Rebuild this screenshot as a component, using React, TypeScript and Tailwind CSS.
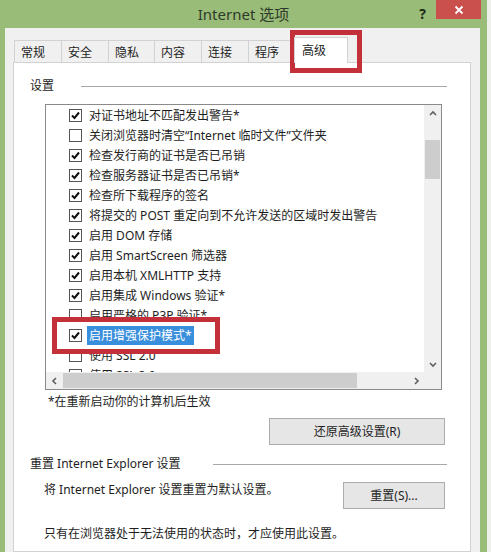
import React from 'react';

const rows: { checked: boolean; label: string; selected?: boolean }[] = [
  { checked: true, label: '对证书地址不匹配发出警告*' },
  { checked: false, label: '关闭浏览器时清空“Internet 临时文件”文件夹' },
  { checked: true, label: '检查发行商的证书是否已吊销' },
  { checked: true, label: '检查服务器证书是否已吊销*' },
  { checked: true, label: '检查所下载程序的签名' },
  { checked: true, label: '将提交的 POST 重定向到不允许发送的区域时发出警告' },
  { checked: true, label: '启用 DOM 存储' },
  { checked: true, label: '启用 SmartScreen 筛选器' },
  { checked: true, label: '启用本机 XMLHTTP 支持' },
  { checked: true, label: '启用集成 Windows 验证*' },
  { checked: false, label: '启用严格的 P3P 验证*' },
  { checked: true, label: '启用增强保护模式*', selected: true },
  { checked: false, label: '使用 SSL 2.0' },
  { checked: false, label: '使用 SSL 3.0' },
];

const tabs = ['常规', '安全', '隐私', '内容', '连接', '程序'];
const tabWidths = ['w-[48px]', 'w-[48px]', 'w-[47px]', 'w-[48px]', 'w-[48px]', 'w-[48px]'];

const Checkbox = ({ checked }: { checked: boolean }) => (
  <div className="w-[13px] h-[13px] border border-[#555] bg-white flex items-center justify-center shrink-0">
    {checked && (
      <svg width="11" height="11" viewBox="0 0 11 11">
        <path d="M2 5.5 L4.5 8 L9 2.5" fill="none" stroke="#111" strokeWidth="2" />
      </svg>
    )}
  </div>
);

const Chevron = ({ dir }: { dir: 'up' | 'down' | 'left' | 'right' }) => {
  const d = {
    up: 'M2 6 L5 3 L8 6',
    down: 'M2 4 L5 7 L8 4',
    left: 'M6 2 L3 5 L6 8',
    right: 'M4 2 L7 5 L4 8',
  }[dir];
  return (
    <svg width="10" height="10" viewBox="0 0 10 10">
      <path d={d} fill="none" stroke="#606060" strokeWidth="1.6" />
    </svg>
  );
};

const App: React.FC = () => {
  return (
    <div className="relative w-[491px] h-[552px] overflow-hidden flex font-['Noto_Sans','Noto_Sans_CJK_SC',sans-serif] text-[#1e1e1e]">
      {/* Dialog window */}
      <div className="w-[487px] h-full bg-[#99bc78] flex flex-col">
        {/* Title bar */}
        <div className="h-[28px] grid grid-cols-[1fr_auto_1fr] items-start shrink-0">
          <div />
          <div className="pt-[4px] text-[15px] leading-[20px] text-[#2f3a2a]">Internet 选项</div>
          <div className="flex justify-end items-start pr-[6px]">
            <span className="mt-[3px] mr-[10px] text-[14px] font-bold text-[#1b2a14]">?</span>
            <div className="w-[45px] h-[19px] bg-[#c9504d] flex items-center justify-center">
              <svg width="10" height="10" viewBox="0 0 10 10">
                <path d="M1.5 1.5 L8.5 8.5 M8.5 1.5 L1.5 8.5" stroke="#fff" strokeWidth="1.8" />
              </svg>
            </div>
          </div>
        </div>

        {/* Body */}
        <div className="flex-1 flex min-h-0">
          <div className="w-[5px]" />
          <div className="w-[475px] bg-[#f0f0f0] pl-[8px] pt-[8px] flex flex-col">
            {/* Tabs */}
            <div className="h-[26px] flex items-end pl-[1px] shrink-0 text-[12px]">
              {tabs.map((t, i) => (
                <div
                  key={t}
                  className={`${tabWidths[i]} h-[22px] border border-b-0 border-[#d2d2d2] -ml-px first:ml-0 bg-[#f0f0f0] pl-[6px] pt-[2px] leading-[20px]`}
                >
                  {t}
                </div>
              ))}
              <div className="w-[54px] h-[26px] -ml-[2px] mb-[-1px] border border-b-0 border-[#d2d2d2] bg-white pl-[7px] pt-[3px] leading-[20px] relative z-10">
                高级
              </div>
            </div>

            {/* Tab page */}
            <div className="w-[458px] flex-1 border border-[#d2d2d2] bg-white flex flex-col text-[12px]">
              {/* 设置 */}
              <div className="mt-[15px] h-[16px] flex items-center pl-[16px] pr-[23px]">
                <span className="leading-[16px]">设置</span>
                <div className="flex-1 h-px bg-[#a8a8a8] ml-[27px]" />
              </div>

              {/* List box */}
              <div className="relative mt-[10px] ml-[31px] w-[397px] h-[286px] border border-[#8a8a8a] flex flex-col">
                <div className="flex-1 flex min-h-0">
                  <div className="flex-1 overflow-hidden">
                    {rows.map((r) => (
                      <div key={r.label} className="h-[20px] flex items-center pl-[23px] whitespace-nowrap">
                        <Checkbox checked={r.checked} />
                        <span
                          className={
                            r.selected
                              ? 'ml-[5px] px-[2px] leading-[19px] bg-[#3a8fdc] text-white'
                              : 'ml-[7px] leading-[19px]'
                          }
                        >
                          {r.label}
                        </span>
                      </div>
                    ))}
                  </div>
                  {/* Vertical scrollbar */}
                  <div className="w-[17px] bg-[#f0f0f0] flex flex-col items-center">
                    <div className="h-[17px] flex items-center justify-center">
                      <Chevron dir="up" />
                    </div>
                    <div className="w-[15px] h-[39px] mt-[18px] bg-[#cdcdcd]" />
                    <div className="flex-1" />
                    <div className="h-[17px] flex items-center justify-center">
                      <Chevron dir="down" />
                    </div>
                  </div>
                </div>
                {/* Horizontal scrollbar */}
                <div className="h-[17px] flex bg-[#f0f0f0]">
                  <div className="w-[17px] flex items-center justify-center">
                    <Chevron dir="left" />
                  </div>
                  <div className="flex-1 flex items-center">
                    <div className="w-[294px] h-[15px] bg-[#cdcdcd]" />
                  </div>
                  <div className="w-[17px] flex items-center justify-center">
                    <Chevron dir="right" />
                  </div>
                  <div className="w-[17px]" />
                </div>

                {/* Annotation around selected row */}
                <div className="absolute left-[6px] top-[212px] w-[168px] h-[37px] border-[5px] border-[#c4303a]" />
              </div>

              <div className="mt-[4px] pl-[34px] leading-[16px]">*在重新启动你的计算机后生效</div>

              <div className="mt-[8px] flex justify-end pr-[25px]">
                <button className="w-[176px] h-[27px] border border-[#acacac] bg-[#e6e6e6] text-[12px]">
                  还原高级设置(R)
                </button>
              </div>

              <div className="mt-[11px] h-[16px] flex items-center pl-[16px] pr-[23px]">
                <span className="leading-[16px]">重置 Internet Explorer 设置</span>
                <div className="flex-1 h-px bg-[#a8a8a8] ml-[32px]" />
              </div>

              <div className="mt-[10px] flex items-start justify-between pl-[30px] pr-[25px]">
                <span className="leading-[16px]">将 Internet Explorer 设置重置为默认设置。</span>
                <button className="w-[102px] h-[27px] border border-[#acacac] bg-[#e6e6e6] text-[12px]">
                  重置(S)...
                </button>
              </div>

              <div className="mt-[17px] pl-[30px] leading-[16px]">只有在浏览器处于无法使用的状态时，才应使用此设置。</div>
            </div>
          </div>
        </div>
      </div>

      {/* Neighbouring window edge */}
      <div className="flex-1 bg-[#eef0ec]" />

      {/* Annotation around 高级 tab */}
      <div className="absolute left-[290px] top-[30px] w-[72px] h-[43px] border-[5px] border-[#c4303a]" />
    </div>
  );
};

export default App;
